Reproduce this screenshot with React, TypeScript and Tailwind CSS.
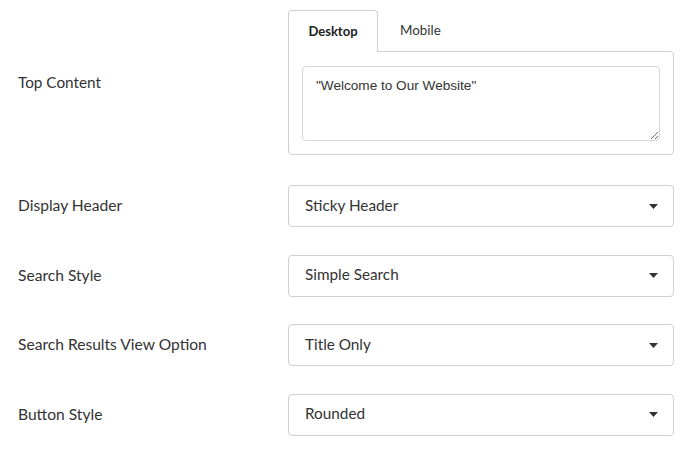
import React from "react";

const Caret = () => (
  <svg width="9" height="5" viewBox="0 0 9 5" className="shrink-0">
    <path d="M0 0 H9 L4.5 5 Z" fill="#333" />
  </svg>
);

const SelectRow = ({ label, value }: { label: string; value: string }) => (
  <div className="flex items-center">
    <div className="w-[270px] text-[15.6px] text-[#333]">{label}</div>
    <div className="flex h-[42px] w-[386px] items-center justify-between rounded-[4px] border border-[#cfcfcf] bg-white pl-[16px] pr-[15px] text-[15.3px] text-[#333]">
      <span className="-translate-y-[1px]">{value}</span>
      <Caret />
    </div>
  </div>
);

export default function App() {
  return (
    <div
      className="min-h-[455px] w-[692px] bg-white pl-[18px] pt-[10px]"
      style={{ fontFamily: "Lato, 'Noto Sans', sans-serif" }}
    >
      <div className="flex items-center">
        <div className="w-[270px] text-[15.3px] text-[#333]">Top Content</div>
        <div className="flex w-[386px] flex-col">
          <div className="flex h-[41px]">
            <div className="relative z-10 flex h-[42px] w-[90px] items-center justify-center rounded-t-[4px] border border-b-0 border-[#cfcfcf] bg-white text-[13px] font-bold text-[#222]">
              Desktop
            </div>
            <div className="flex h-[41px] items-center pl-[22px] text-[13.4px] text-[#333]">
              Mobile
            </div>
          </div>
          <div className="rounded-b-[4px] rounded-tr-[4px] border border-[#cfcfcf] bg-white px-[13px] pb-[13px] pt-[14px]">
            <textarea
              className="block h-[75px] w-full rounded-[4px] border border-[#d6d6d6] px-[13px] py-[9px] text-[13.6px] text-[#333] outline-none"
              style={{ fontFamily: "'Liberation Sans', Arial, sans-serif" }}
              defaultValue={'"Welcome to Our Website"'}
            />
          </div>
        </div>
      </div>
      <div className="mt-[30px] flex flex-col gap-[27.6px]">
        <SelectRow label="Display Header" value="Sticky Header" />
        <SelectRow label="Search Style" value="Simple Search" />
        <SelectRow label="Search Results View Option" value="Title Only" />
        <SelectRow label="Button Style" value="Rounded" />
      </div>
    </div>
  );
}
